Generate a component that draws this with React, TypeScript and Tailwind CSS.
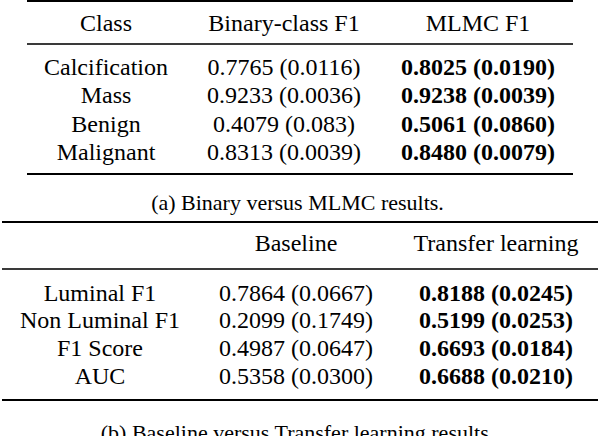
import React from 'react';

const tableA = [
  ['Calcification', '0.7765 (0.0116)', '0.8025 (0.0190)'],
  ['Mass', '0.9233 (0.0036)', '0.9238 (0.0039)'],
  ['Benign', '0.4079 (0.083)', '0.5061 (0.0860)'],
  ['Malignant', '0.8313 (0.0039)', '0.8480 (0.0079)'],
];

const tableB = [
  ['Luminal F1', '0.7864 (0.0667)', '0.8188 (0.0245)'],
  ['Non Luminal F1', '0.2099 (0.1749)', '0.5199 (0.0253)'],
  ['F1 Score', '0.4987 (0.0647)', '0.6693 (0.0184)'],
  ['AUC', '0.5358 (0.0300)', '0.6688 (0.0210)'],
];

export default function App() {
  return (
    <div className="w-[600px] h-[436px] overflow-hidden bg-white text-black font-[family-name:Liberation_Serif,Times_New_Roman,serif]">
      {/* (a) Binary versus MLMC */}
      <div className="ml-[27px] w-[546px]">
        <div className="h-[2px] bg-black" />
        <div className="grid grid-cols-[158px_198px_190px] pt-[7px] pb-[5.5px] text-center text-[24px] leading-[28.5px] whitespace-nowrap">
          <div>Class</div>
          <div>Binary-class F1</div>
          <div>MLMC F1</div>
        </div>
        <div className="h-[2px] bg-[#3a3a3a]" />
        <div className="grid grid-cols-[158px_198px_190px] pt-[7.5px] pb-[6.5px] text-center text-[24px] leading-[28.5px] whitespace-nowrap">
          {tableA.map(([name, binary, mlmc]) => (
            <React.Fragment key={name}>
              <div>{name}</div>
              <div>{binary}</div>
              <div className="font-bold">{mlmc}</div>
            </React.Fragment>
          ))}
        </div>
        <div className="h-[2px] bg-black" />
      </div>
      <p className="mt-[15.6px] pr-[5px] text-center text-[22px] leading-[24px] whitespace-nowrap">(a) Binary versus MLMC results.</p>

      {/* (b) Baseline versus Transfer learning */}
      <div className="mt-[6.4px] ml-[2px] w-[596px]">
        <div className="h-[2px] bg-black" />
        <div className="grid grid-cols-[196px_196px_204px] pt-[6.4px] pb-[11.1px] text-center text-[24px] leading-[28px] whitespace-nowrap">
          <div />
          <div>Baseline</div>
          <div>Transfer learning</div>
        </div>
        <div className="h-[2px] bg-[#3a3a3a]" />
        <div className="grid grid-cols-[196px_196px_204px] pt-[9.2px] pb-[8.1px] text-center text-[24px] leading-[27.8px] whitespace-nowrap">
          {tableB.map(([name, base, transfer]) => (
            <React.Fragment key={name}>
              <div>{name}</div>
              <div>{base}</div>
              <div className="font-bold">{transfer}</div>
            </React.Fragment>
          ))}
        </div>
        <div className="h-[2px] bg-black" />
      </div>
      <p className="mt-[19.6px] pr-[5px] text-center text-[22px] leading-[24px] whitespace-nowrap">(b) Baseline versus Transfer learning results.</p>
    </div>
  );
}
